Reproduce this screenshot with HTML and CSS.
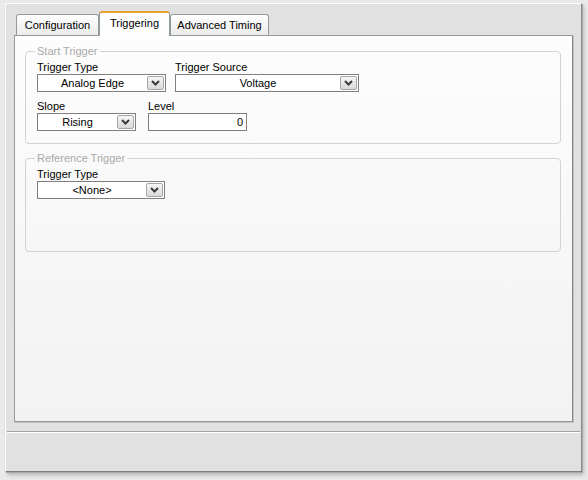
FILE: index.html
```html
<!DOCTYPE html>
<html>
<head>
<meta charset="utf-8">
<link rel="stylesheet" href="styles.css">
</head>
<body>
<div class="frame">
  <div class="tabs">
    <div class="tab tab-config">Configuration</div>
    <div class="tab tab-trig active">Triggering</div>
    <div class="tab tab-adv">Advanced Timing</div>
  </div>
  <div class="panel">
    <fieldset class="group group-start">
      <legend>Start Trigger</legend>
      <div class="row">
        <div class="field">
          <div class="label">Trigger Type</div>
          <div class="combo w-type"><span class="val">Analog Edge</span><span class="btn"><svg width="9" height="6" viewBox="0 0 9 6"><polyline points="1,1 4.5,4.5 8,1" fill="none" stroke="#3c3c3c" stroke-width="2"/></svg></span></div>
        </div>
        <div class="field">
          <div class="label">Trigger Source</div>
          <div class="combo w-source"><span class="val">Voltage</span><span class="btn"><svg width="9" height="6" viewBox="0 0 9 6"><polyline points="1,1 4.5,4.5 8,1" fill="none" stroke="#3c3c3c" stroke-width="2"/></svg></span></div>
        </div>
      </div>
      <div class="row row2">
        <div class="field">
          <div class="label">Slope</div>
          <div class="combo w-slope"><span class="val">Rising</span><span class="btn"><svg width="9" height="6" viewBox="0 0 9 6"><polyline points="1,1 4.5,4.5 8,1" fill="none" stroke="#3c3c3c" stroke-width="2"/></svg></span></div>
        </div>
        <div class="field">
          <div class="label">Level</div>
          <div class="input w-level">0</div>
        </div>
      </div>
    </fieldset>
    <fieldset class="group group-ref">
      <legend>Reference Trigger</legend>
      <div class="row">
        <div class="field">
          <div class="label">Trigger Type</div>
          <div class="combo w-reftype"><span class="val">&lt;None&gt;</span><span class="btn"><svg width="9" height="6" viewBox="0 0 9 6"><polyline points="1,1 4.5,4.5 8,1" fill="none" stroke="#3c3c3c" stroke-width="2"/></svg></span></div>
        </div>
      </div>
    </fieldset>
  </div>
  <div class="sep"></div>
</div>
</body>
</html>
```
FILE: styles.css
```css
html, body {
  margin: 0;
  padding: 0;
}
body {
  width: 588px;
  height: 480px;
  overflow: hidden;
  background: #eaeaea;
  font-family: "Liberation Sans", Arial, sans-serif;
  font-size: 11px;
  line-height: 13px;
  color: #000;
}
.frame {
  box-sizing: border-box;
  width: 577px;
  height: 469px;
  margin: 3px 0 0 5px;
  background: #e1e1e1;
  border-top: 1px solid #ffffff;
  border-left: 1px solid #ffffff;
  border-right: 1px solid #8a8a8a;
  border-bottom: 1px solid #7e7e7e;
  box-shadow: 1px 1px 0 #a9a9a9, 2px 3px 4px rgba(0, 0, 0, 0.22);
  display: flex;
  flex-direction: column;
}
.tabs {
  display: flex;
  align-items: flex-end;
  height: 24px;
  margin-top: 7px;
  padding-left: 10px;
}
.tab {
  box-sizing: border-box;
  height: 21px;
  padding-top: 4px;
  text-align: center;
  border: 1px solid #919b9c;
  border-bottom: none;
  border-radius: 3px 3px 0 0;
  background: linear-gradient(#ffffff, #ebebeb);
  white-space: nowrap;
}
.tab-config { width: 83px; }
.tab-trig { width: 71px; }
.tab-adv { width: 99px; }
.tab.active {
  height: 25px;
  margin-bottom: -1px;
  padding-top: 4px;
  background: #fdfdfd;
  border-top: 2px solid #e8a02e;
  position: relative;
  z-index: 1;
}
.panel {
  box-sizing: border-box;
  width: 559px;
  height: 387px;
  margin-left: 8px;
  border: 1px solid #919b9c;
  border-right-color: #7d8586;
  box-shadow: 1px 1px 0 #c2c2c2;
  background: linear-gradient(#fdfdfd, #f2f2f2);
  padding: 9px 0 0 10px;
}
.group {
  box-sizing: border-box;
  width: 536px;
  margin: 0;
  border: 1px solid #d3d3cc;
  border-radius: 4px;
  padding: 3px 11px 12px;
  min-inline-size: 0;
}
.group legend {
  color: #a9a9a9;
  padding: 0 2px;
  margin-left: -2px;
  line-height: 13px;
}
.group-ref {
  margin-top: 8px;
  padding-bottom: 52px;
}
.row {
  display: flex;
  gap: 9px;
}
.row2 {
  margin-top: 8px;
  gap: 12px;
}
.field {
  display: flex;
  flex-direction: column;
}
.label {
  height: 13px;
}
.combo {
  box-sizing: border-box;
  height: 18px;
  border: 1px solid #7f7f7f;
  background: #fff;
  display: flex;
  align-items: center;
}
.combo .val {
  flex: 1;
  text-align: center;
  white-space: nowrap;
}
.combo .btn {
  box-sizing: border-box;
  width: 17px;
  height: 14px;
  margin-right: 1px;
  border: 1px solid #a7a7a7;
  border-radius: 2px;
  background: linear-gradient(#f6f6f6, #d9d9d9);
  display: flex;
  align-items: center;
  justify-content: center;
}
.w-type { width: 129px; }
.w-source { width: 184px; }
.w-slope { width: 99px; }
.w-reftype { width: 128px; }
.input {
  box-sizing: border-box;
  height: 18px;
  border: 1px solid #7f7f7f;
  background: #fff;
  text-align: right;
  padding: 2px 3px 0 0;
}
.w-level { width: 99px; }
.sep {
  margin: 9px 1px 0;
  border-top: 1px solid #a3a3a3;
  border-bottom: 1px solid #ffffff;
}
```
